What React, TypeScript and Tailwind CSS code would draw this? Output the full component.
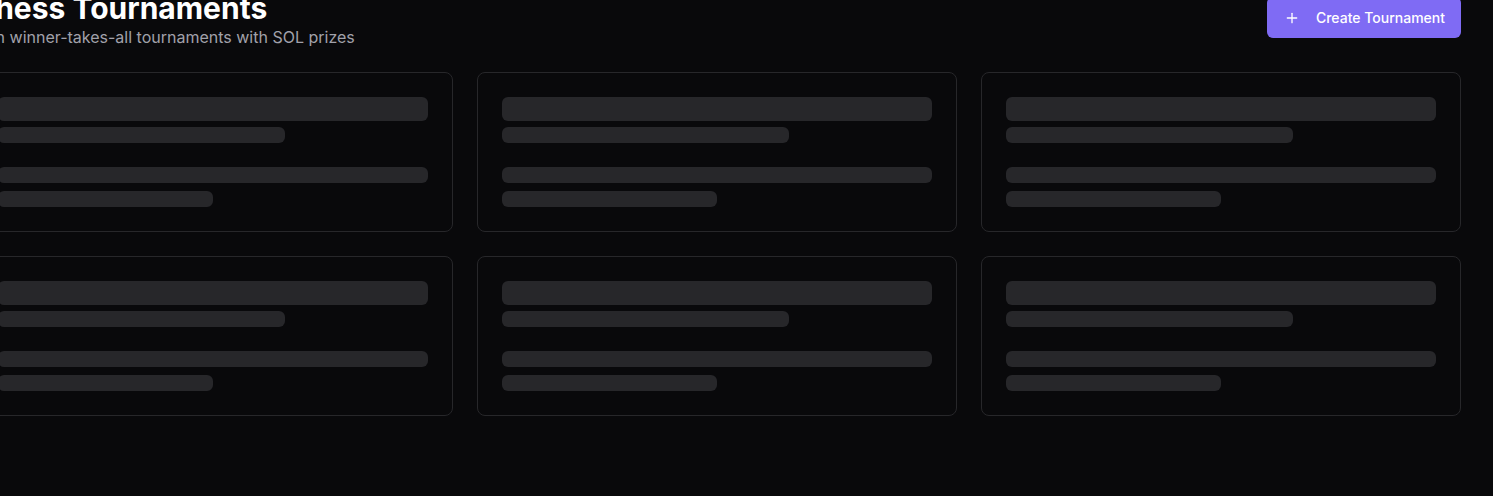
import React from "react";

function Skeleton({ className }: { className: string }) {
  return <div className={`rounded-md bg-[#27272a] ${className}`} />;
}

function SkeletonCard() {
  return (
    <div className="rounded-lg border border-[#27272a] bg-[#09090b]">
      <div className="flex flex-col gap-1.5 p-6">
        <Skeleton className="h-6 w-full" />
        <Skeleton className="h-4 w-2/3" />
      </div>
      <div className="flex flex-col gap-2 px-6 pb-6">
        <Skeleton className="h-4 w-full" />
        <Skeleton className="h-4 w-1/2" />
      </div>
    </div>
  );
}

export default function App() {
  return (
    <div
      className="min-h-screen w-full overflow-hidden bg-[#09090b]"
      style={{ fontFamily: "Inter, 'Noto Sans', sans-serif" }}
    >
      <div className="ml-[-27px] mt-[-10px] w-[1488px]">
        <div className="mb-[23px] flex items-start justify-between">
          <div>
            <h1 className="text-3xl font-bold leading-9 text-white">Chess Tournaments</h1>
            <p className="-mt-px text-base text-[#a1a1aa]">
              Join winner-takes-all tournaments with SOL prizes
            </p>
          </div>
          <button className="mt-[7px] flex h-[41px] items-center gap-4 rounded-md bg-[#7f6bf4] pl-[17px] pr-4 text-sm font-medium text-white">
            <svg
              width="16"
              height="16"
              viewBox="0 0 24 24"
              fill="none"
              stroke="currentColor"
              strokeWidth="2"
              strokeLinecap="round"
              strokeLinejoin="round"
            >
              <path d="M5 12h14" />
              <path d="M12 5v14" />
            </svg>
            Create Tournament
          </button>
        </div>
        <div className="grid grid-cols-3 gap-6">
          <SkeletonCard />
          <SkeletonCard />
          <SkeletonCard />
          <SkeletonCard />
          <SkeletonCard />
          <SkeletonCard />
        </div>
      </div>
    </div>
  );
}
